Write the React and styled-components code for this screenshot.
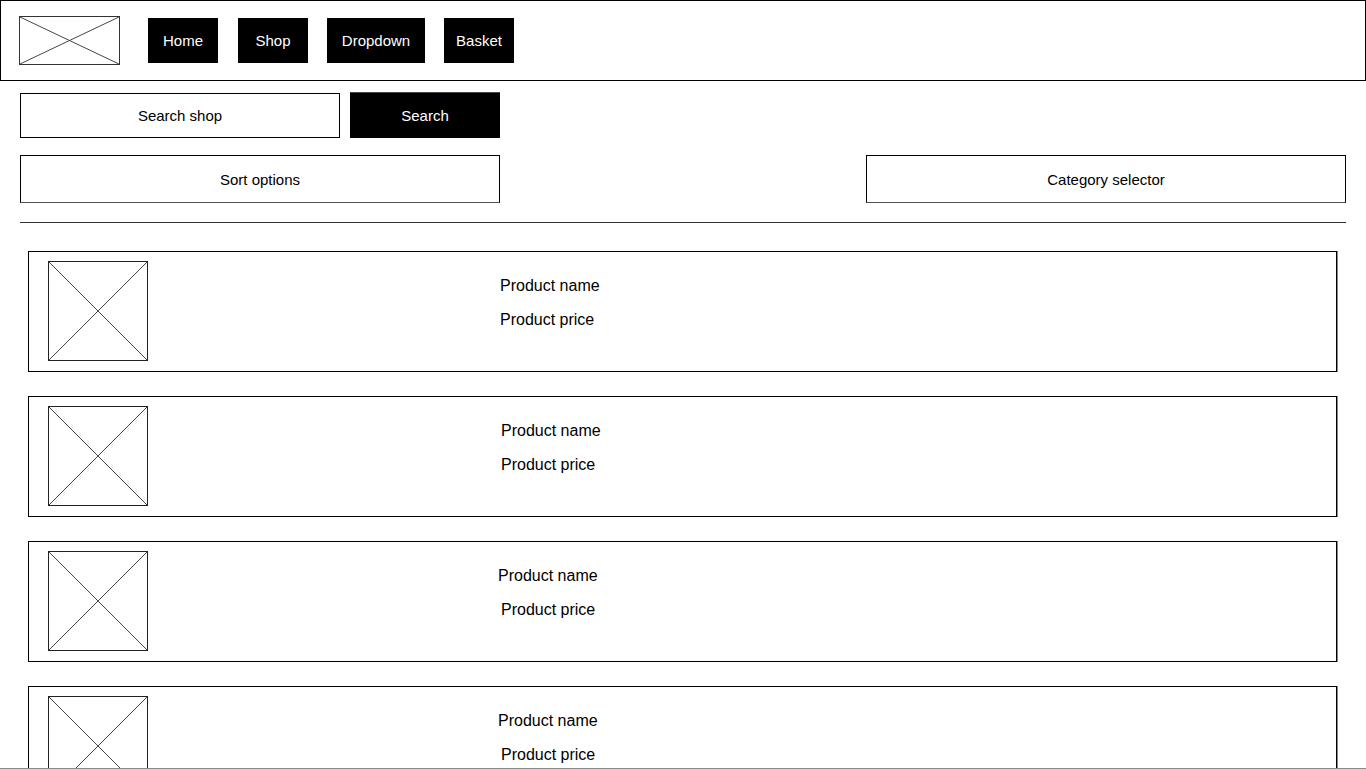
import React from "react";
import styled, { createGlobalStyle } from "styled-components";

const GlobalStyle = createGlobalStyle`
  * {
    box-sizing: border-box;
  }
  body {
    margin: 0;
    background: #fff;
    font-family: "Liberation Sans", Arial, sans-serif;
    color: #000;
  }
`;

const Page = styled.div`
  height: 769px;
  overflow: hidden;
  border-bottom: 1px solid #8a8a8a;
`;

const Header = styled.header`
  display: flex;
  align-items: center;
  height: 81px;
  padding: 0 18px;
  border: 1px solid #000;
`;

const Logo = styled.div`
  width: 101px;
  height: 49px;
  margin-right: 28px;
  border: 1px solid #333;
`;

const Nav = styled.nav`
  display: flex;
  gap: 19px;
`;

const NavButton = styled.a`
  display: flex;
  align-items: center;
  justify-content: center;
  width: ${p => p.$width}px;
  height: 45px;
  margin-right: ${p => (p.$first ? 1 : 0)}px;
  background: #000;
  color: #fff;
  font-size: 15px;
  text-decoration: none;
`;

const Toolbar = styled.div`
  display: flex;
  align-items: flex-end;
  gap: 10px;
  padding: 11px 20px 0;
`;

const SearchInput = styled.div`
  display: flex;
  align-items: center;
  justify-content: center;
  width: 320px;
  height: 45px;
  border: 1px solid #000;
  font-size: 15px;
`;

const SearchButton = styled.div`
  display: flex;
  align-items: center;
  justify-content: center;
  width: 150px;
  height: 46px;
  background: #000;
  border-top: 1px solid #444;
  color: #fff;
  font-size: 15px;
`;

const FilterRow = styled.div`
  display: flex;
  justify-content: space-between;
  padding: 17px 20px 0;
`;

const Selector = styled.div`
  display: flex;
  align-items: center;
  justify-content: center;
  width: 480px;
  height: 48px;
  border: 1px solid #000;
  border-bottom-color: #555;
  font-size: 15px;
`;

const Divider = styled.hr`
  margin: 19px 20px 0;
  border: 0;
  border-top: 1px solid #333;
`;

const List = styled.div`
  display: flex;
  flex-direction: column;
  gap: 24px;
  padding: 28px 29px 0 28px;
`;

const Card = styled.div`
  display: flex;
  align-items: flex-start;
  height: 121px;
  padding: 9px 19px;
  border: 1px solid #000;
  box-shadow: 1px 0 0 #888;
`;

const Thumb = styled.div`
  flex: none;
  width: 100px;
  height: 100px;
  border: 1px solid #222;
`;

const Info = styled.div`
  display: flex;
  flex-direction: column;
  gap: 16px;
  margin-left: ${p => p.$offset}px;
  padding-top: 16px;
  font-size: 16px;
  line-height: 18px;
`;

const Price = styled.span`
  margin-left: ${p => p.$shift}px;
`;

const Cross = ({ w, h }) => (
  <svg width="100%" height="100%" viewBox={`0 0 ${w} ${h}`} preserveAspectRatio="none" style={{ display: "block" }}>
    <line x1="0" y1="0" x2={w} y2={h} stroke="#444" strokeWidth="1" vectorEffect="non-scaling-stroke" />
    <line x1={w} y1="0" x2="0" y2={h} stroke="#444" strokeWidth="1" vectorEffect="non-scaling-stroke" />
  </svg>
);

const navItems = [
  { label: "Home", width: 70 },
  { label: "Shop", width: 70 },
  { label: "Dropdown", width: 98 },
  { label: "Basket", width: 70 },
];

const products = [
  { id: 1, offset: 352, shift: 0 },
  { id: 2, offset: 353, shift: 0 },
  { id: 3, offset: 350, shift: 3 },
  { id: 4, offset: 350, shift: 3 },
];

export default function App() {
  return (
    <Page>
      <GlobalStyle />
      <Header>
        <Logo>
          <Cross w={100} h={48} />
        </Logo>
        <Nav>
          {navItems.map((item, i) => (
            <NavButton key={item.label} href="#" $width={item.width} $first={i === 0}>
              {item.label}
            </NavButton>
          ))}
        </Nav>
      </Header>

      <Toolbar>
        <SearchInput>Search shop</SearchInput>
        <SearchButton>Search</SearchButton>
      </Toolbar>

      <FilterRow>
        <Selector>Sort options</Selector>
        <Selector>Category selector</Selector>
      </FilterRow>

      <Divider />

      <List>
        {products.map(p => (
          <Card key={p.id}>
            <Thumb>
              <Cross w={100} h={100} />
            </Thumb>
            <Info $offset={p.offset}>
              <span>Product name</span>
              <Price $shift={p.shift}>Product price</Price>
            </Info>
          </Card>
        ))}
      </List>
    </Page>
  );
}
